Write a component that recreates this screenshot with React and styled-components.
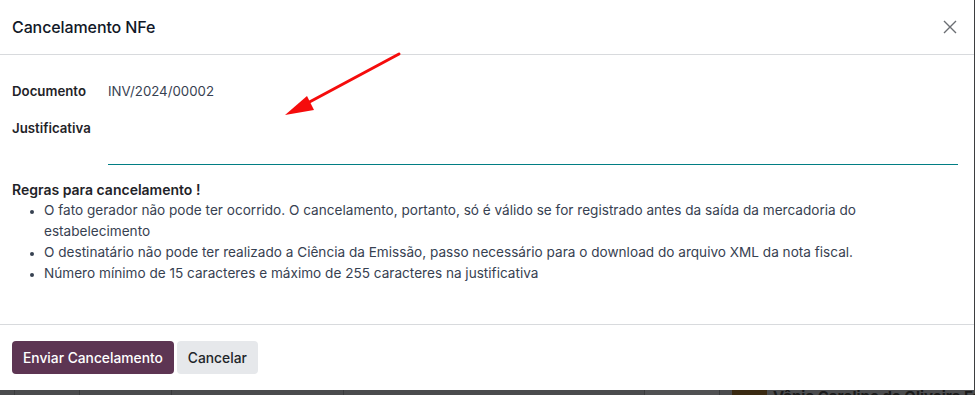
import React from "react";
import styled, { createGlobalStyle } from "styled-components";

const Global = createGlobalStyle`
  html, body { margin: 0; padding: 0; }
  body {
    background: #3d3e40;
    font-family: Inter, "Noto Sans", "Liberation Sans", sans-serif;
    color: #212529;
    width: 975px;
    height: 395px;
    overflow: hidden;
  }
`;

const Page = styled.div`
  display: flex;
  flex-direction: column;
  width: 975px;
  height: 395px;
`;

const Dialog = styled.div`
  position: relative;
  width: 974px;
  height: 390px;
  background: #fff;
  display: flex;
  flex-direction: column;
  flex-shrink: 0;
`;

const Header = styled.header`
  height: 55px;
  box-sizing: border-box;
  border-bottom: 1px solid #d8dadd;
  display: flex;
  align-items: center;
  justify-content: space-between;
  padding: 0 16px 0 12px;
`;

const Title = styled.h4`
  margin: 0;
  font-size: 16px;
  font-weight: 500;
  color: #111827;
  letter-spacing: -0.1px;
`;

const CloseButton = styled.button`
  border: 0;
  background: transparent;
  padding: 0;
  width: 16px;
  height: 16px;
  display: flex;
  align-items: center;
  justify-content: center;
  cursor: pointer;
`;

const Body = styled.main`
  flex: 1;
  padding: 26px 16px 0 12px;
  box-sizing: border-box;
`;

const FieldGrid = styled.div`
  display: grid;
  grid-template-columns: 96px 1fr;
  align-items: start;
`;

const Label = styled.div`
  font-size: 13.25px;
  font-weight: 600;
  color: #1f2328;
  line-height: 21px;
  padding-top: ${(p) => p.$top || 0}px;
`;

const Value = styled.div`
  font-size: 13.25px;
  color: #374151;
  line-height: 21px;
`;

const TextArea = styled.div`
  margin-top: 16px;
  height: 47px;
  box-sizing: border-box;
  border-bottom: 1px solid #017e84;
`;

const RulesTitle = styled.div`
  margin-top: 14px;
  font-size: 14px;
  font-weight: 600;
  color: #1f2328;
  line-height: 21px;
`;

const RuleList = styled.ul`
  margin: 0;
  padding-left: 32px;
  font-size: 13.6px;
  line-height: 21px;
  color: #374151;
  li::marker { font-size: 11px; }
`;

const Footer = styled.footer`
  height: 66px;
  border-top: 1px solid #d8dadd;
  display: flex;
  align-items: flex-start;
  gap: 3px;
  padding: 16px 12px 0;
  box-sizing: border-box;
`;

const Button = styled.button`
  height: 33px;
  border: 0;
  border-radius: 4px;
  padding: 0 11px;
  font-family: inherit;
  font-size: 13.8px;
  font-weight: 500;
  background: ${(p) => (p.$primary ? "#5d3553" : "#e6e8eb")};
  color: ${(p) => (p.$primary ? "#ffffff" : "#212529")};
  cursor: pointer;
`;

const Arrow = styled.svg`
  position: absolute;
  left: 280px;
  top: 48px;
  pointer-events: none;
`;

const Backdrop = styled.div`
  flex: 1;
  display: flex;
  align-items: flex-start;
  background: #4a4b4d;
  overflow: hidden;
`;

const Cell = styled.div`
  width: ${(p) => p.$w}px;
  height: 5px;
  flex-shrink: 0;
  border-right: 1px solid #3a3b3d;
  background: ${(p) => p.$bg || "#4a4b4d"};
`;

const Avatar = styled.div`
  width: 35px;
  height: 5px;
  background: #3a2a12;
  margin-left: 12px;
  flex-shrink: 0;
`;

const Name = styled.div`
  margin-left: 6px;
  font-size: 15px;
  font-weight: 700;
  color: #1b1b1b;
  line-height: 15px;
  margin-top: -1px;
  white-space: nowrap;
`;

export default function App() {
  return (
    <Page>
      <Global />
      <Dialog>
        <Header>
          <Title>Cancelamento NFe</Title>
          <CloseButton aria-label="Fechar">
            <svg width="14" height="14" viewBox="0 0 14 14">
              <path d="M1 1 L13 13 M13 1 L1 13" stroke="#6b6e73" strokeWidth="1.4" fill="none" />
            </svg>
          </CloseButton>
        </Header>
        <Body>
          <FieldGrid>
            <Label>Documento</Label>
            <Value>INV/2024/00002</Value>
            <Label $top={16}>Justificativa</Label>
            <TextArea />
          </FieldGrid>
          <RulesTitle>Regras para cancelamento !</RulesTitle>
          <RuleList>
            <li>
              O fato gerador não pode ter ocorrido. O cancelamento, portanto, só é válido se for registrado antes da saída da mercadoria do estabelecimento
            </li>
            <li>
              O destinatário não pode ter realizado a Ciência da Emissão, passo necessário para o download do arquivo XML da nota fiscal.
            </li>
            <li>Número mínimo de 15 caracteres e máximo de 255 caracteres na justificativa</li>
          </RuleList>
        </Body>
        <Footer>
          <Button $primary>Enviar Cancelamento</Button>
          <Button>Cancelar</Button>
        </Footer>
        <Arrow width="130" height="75" viewBox="0 0 130 75">
          <line x1="119" y1="6" x2="22" y2="58" stroke="#f50c0c" strokeWidth="3" strokeLinecap="round" />
          <polygon points="5,67 27,48 34,62" fill="#f50c0c" />
        </Arrow>
      </Dialog>
      <Backdrop>
        <Cell $w={14} />
        <Cell $w={64} />
        <Cell $w={91} />
        <Cell $w={171} />
        <Cell $w={300} />
        <Cell $w={74} $bg="#505153" />
        <Avatar />
        <Name>Vânia Caroline de Oliveira Ferr</Name>
      </Backdrop>
    </Page>
  );
}
